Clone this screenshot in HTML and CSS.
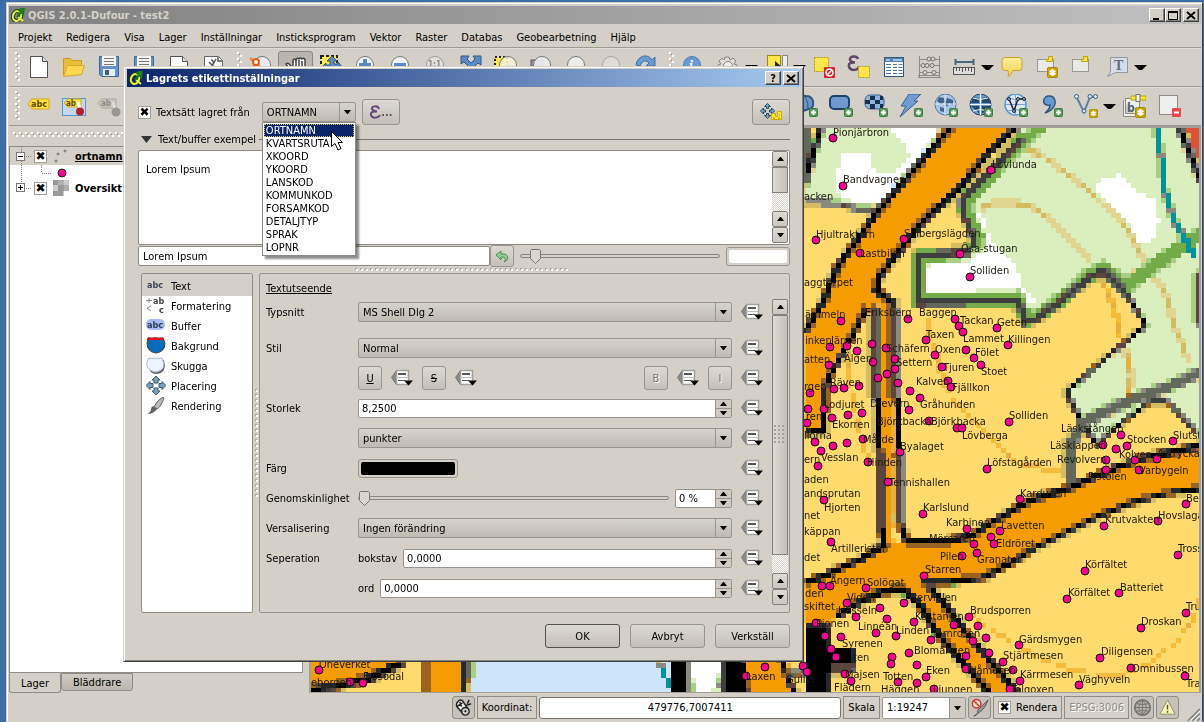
FILE: index.html
```html
<!DOCTYPE html>
<html lang="sv">
<head>
    <meta charset="UTF-8">
    <meta name="viewport" content="width=device-width, initial-scale=1.0">
    <title>QGIS 2.0.1-Dufour - test2</title>
    <link rel="stylesheet" href="styles.css">
</head>
<body>
    <!-- icons -->
    <svg class="defs" width="0" height="0" aria-hidden="true">
        <defs>
            <linearGradient id="gYellow" x1="0" y1="0" x2="0" y2="1"><stop offset="0" stop-color="#fdf0a0"/><stop offset="1" stop-color="#ecd04c"/></linearGradient>
        </defs>
        <symbol id="logo" viewBox="0 0 14 14"><ellipse cx="6" cy="8" rx="4" ry="5" transform="rotate(20 6 8)" fill="none" stroke="#1f3d0c" stroke-width="4"/><ellipse cx="6" cy="8" rx="4" ry="5" transform="rotate(20 6 8)" fill="none" stroke="#eaf24a" stroke-width="2"/><path d="M7 9l5 4" stroke="#eaf24a" stroke-width="2"/><path d="M6 9l5-6M8 2l5-2-1 6z" stroke="#1c7a1c" stroke-width="2" fill="#3db52f"/></symbol>
        <symbol id="plus" viewBox="0 0 9 9"><rect x=".5" y=".5" width="8" height="8" rx="1" fill="#5a9a5a" stroke="#3e7d42"/><path d="M4.500 2v5M2 4.500h5" stroke="#fff" stroke-width="2"/></symbol>
        <symbol id="star" viewBox="0 0 11 11"><rect x=".5" y=".5" width="10" height="10" rx="1" fill="#c9a400" stroke="#a98a00"/><path d="M5.500 2v7M2.500 3.800l6 3.400M8.500 3.800l-6 3.400" stroke="#fff" stroke-width="2"/></symbol>
        <symbol id="new" viewBox="0 0 24 24"><path d="M3.500 1.500h12l5 5v16h-17z" fill="#fff" stroke="#555"/><path d="M15.500 1.500v5h5" fill="#ddd" stroke="#555"/></symbol>
        <symbol id="open" viewBox="0 0 24 24"><path d="M1.500 21V3.500h7l2 2h9v4" fill="#e8bf3b" stroke="#c79b1f"/><path d="M1.500 21.500l4-11H22.500l-3 9z" fill="#ffd84f" stroke="#d6a928"/></symbol>
        <symbol id="save" viewBox="0 0 24 24"><path d="M2.500 1.500h19v20h-17l-2-2z" fill="#6492c8" stroke="#42678f"/><rect x="5" y="1" width="14" height="10" fill="#f4f4f4"/><path d="M7 3.500h10M7 6.500h10M7 9.500h10" stroke="#777"/><rect x="6" y="14" width="12" height="7" fill="#e8edf3"/><rect x="8" y="15" width="4" height="5" fill="#3b5c86"/></symbol>
        <symbol id="tools" viewBox="0 0 24 24"><path d="M2.500 1.500h14l4 4v16h-18z" fill="#fff" stroke="#666"/><path d="M16 2v4h4M7 7l9 9M9 5c2 0 3 2 2 4M14 4l-5 9" fill="none" stroke="#555" stroke-width="1.500"/></symbol>
        <symbol id="touch" viewBox="0 0 24 24"><circle cx="13" cy="10" r="8.500" fill="#eee" stroke="#777"/><path d="M1 3l10 9" stroke="#e98b4c" stroke-width="3"/><circle cx="7" cy="7" r="3" fill="#fff" stroke="#e35b12" stroke-width="2"/></symbol>
        <symbol id="hand" viewBox="0 0 24 24"><path d="M5 14L2 9q2-2 4 1l3 3V5q2-2 3 0 1-3 3-1 1-2 3 0 2-2 3 1v10l-3 6h-8z" fill="#fff" stroke="#444" stroke-width="1.500"/><path d="M12 5v6M15 5v6M18 6v5" stroke="#444" stroke-width="1.500"/></symbol>
        <symbol id="panto" viewBox="0 0 24 24"><rect x="2" y="1" width="16" height="18" fill="#ffe948" stroke="#222" stroke-width="2" stroke-dasharray="3 2"/><path d="M13 1l5 5h-3v3h4V7l5 6-5 5v-3H7v3l-5-5 5-5v2h4V6H8z" fill="#5b8cc9" stroke="#2d5583"/></symbol>
        <symbol id="zin" viewBox="0 0 24 24"><circle cx="11" cy="10" r="8.500" fill="#f2f4f8" stroke="#777"/><path d="M11 4v12M5 10h12" stroke="#5a8ac6" stroke-width="4"/></symbol>
        <symbol id="zout" viewBox="0 0 24 24"><circle cx="11" cy="10" r="8.500" fill="#f2f4f8" stroke="#777"/><path d="M5 10h12" stroke="#5a8ac6" stroke-width="4"/></symbol>
        <symbol id="z11" viewBox="0 0 24 24"><circle cx="11" cy="10" r="8.500" fill="#e4e1dc" stroke="#999"/><text x="4" y="12" font-size="8" font-weight="bold" fill="#888">1:1</text></symbol>
        <symbol id="zfull" viewBox="0 0 24 24"><path d="M2 1h8L8 4l4 4 4-4-2-3h8v9l-3-2-4 4 4 4 3-2v7h-8l2-3-4-4-4 4 2 3H2v-8l3 2 4-4-4-4-3 2z" fill="#5c8ac2" stroke="#34597f"/></symbol>
        <symbol id="zsel" viewBox="0 0 24 24"><rect x="1" y="2" width="12" height="14" fill="#ffe948" stroke="#222" stroke-width="2" stroke-dasharray="2 2"/><circle cx="14" cy="10" r="8.500" fill="#f3efd2" fill-opacity=".9" stroke="#777"/></symbol>
        <symbol id="zlay" viewBox="0 0 24 24"><rect x="2" y="5" width="12" height="14" fill="#9b93a8" stroke="#555"/><circle cx="13" cy="10" r="8.500" fill="#eeeef2" fill-opacity=".9" stroke="#777"/></symbol>
        <symbol id="zlast" viewBox="0 0 24 24"><circle cx="12" cy="10" r="8.500" fill="#ececec" stroke="#777"/></symbol>
        <symbol id="znext" viewBox="0 0 24 24"><circle cx="12" cy="10" r="8.500" fill="#dfdcd6" stroke="#aaa49a"/></symbol>
        <symbol id="refresh" viewBox="0 0 24 24"><path d="M2 10C4-1 15-1 18 5l3-3v9h-9l3-3C13 5 8 5 6 11z" fill="#6a9ad2" stroke="#3c6ea5"/></symbol>
        <symbol id="info" viewBox="0 0 24 24"><circle cx="11" cy="10" r="8.500" fill="#6a9ad6" stroke="#4d7db8"/><text x="8" y="15" font-size="14" font-style="italic" font-weight="bold" font-family="Liberation Serif, serif" fill="#fff">i</text></symbol>
        <symbol id="gear" viewBox="0 0 24 24"><path d="M9 2h4l1 3 3-2 3 3-2 3 3 1v4H2v-4l3-1-2-3 3-3 2 2z" fill="#dedbd5" stroke="#88847c"/><circle cx="12" cy="11" r="4.500" fill="#eee" stroke="#88847c"/></symbol>
        <symbol id="select" viewBox="0 0 24 24"><rect x="3.500" y=".5" width="13" height="14" fill="#ffe948" stroke="#9c8a10"/><rect x="18.500" y=".5" width="5" height="14" fill="#eee" stroke="#888"/><path d="M11 6v10l3-3 4-1z" fill="#222"/></symbol>
        <symbol id="deselect" viewBox="0 0 24 24"><rect x="2.500" y="2.500" width="14" height="14" fill="#ffe74a" stroke="#b79b17" stroke-dasharray="2 1"/><rect x="12" y="12" width="11" height="11" rx="1" fill="#e0212b"/><circle cx="17.500" cy="17.500" r="3.500" fill="none" stroke="#fff" stroke-width="1.500"/><path d="M15 20l5-5" stroke="#fff" stroke-width="1.500"/></symbol>
        <symbol id="expr" viewBox="0 0 24 24"><path d="M11 4C10 0 2 1 3 5q1 2 5 2.500Q1 7 2 11.500c1 5 9 4 10 0" fill="none" stroke="#5f4569" stroke-width="2.500"/><rect x="11.500" y="11.500" width="11" height="11" fill="#ffe74a" stroke="#b79b17" stroke-dasharray="2 1"/></symbol>
        <symbol id="table" viewBox="0 0 24 24"><rect x="2.500" y="2.500" width="19" height="19" fill="#fff" stroke="#345a7a"/><rect x="3" y="3" width="18" height="4" fill="#4f81b5"/><path d="M4 9.500h5M4 12.500h5M4 15.500h5M4 18.500h5M11 9.500h4M11 12.500h4M11 15.500h4M11 18.500h4M16.500 9.500h4M16.500 12.500h4M16.500 15.500h4M16.500 18.500h4" stroke="#547b9e"/><path d="M4 5h4M11 5h9" stroke="#fff"/></symbol>
        <symbol id="abacus" viewBox="0 0 24 24"><path d="M2.500 1v22M22.500 1v22M1 22.500h23M1 20.500h22M3 4.500h19M3 10.500h19M3 17.500h19" stroke="#8f8b84"/><g fill="#d9d5ce" stroke="#77736c"><circle cx="12" cy="4" r="2"/><circle cx="16" cy="4" r="2"/><circle cx="6" cy="10.500" r="2"/><circle cx="10" cy="10.500" r="2"/><circle cx="15" cy="10.500" r="2"/><circle cx="8" cy="17.500" r="2"/><circle cx="17" cy="17.500" r="2"/></g></symbol>
        <symbol id="measure" viewBox="0 0 24 24"><path d="M3.500 4v6M21.500 4v6M3 7h18" stroke="#46697e" stroke-width="2" fill="none"/><rect x="1.500" y="12.500" width="21" height="7" fill="#dedede" stroke="#555"/><path d="M4.500 13v3M7.500 13v3M10.500 13v4M13.500 13v3M16.500 13v3M19.500 13v4" stroke="#555"/></symbol>
        <symbol id="tip" viewBox="0 0 24 24"><path d="M5 2.500h14q3 0 3 3v7q0 3-3 3h-6q-2 5-5 6 1-3 0-6H5q-3 0-3-3v-7q0-3 3-3z" fill="url(#gYellow)" stroke="#c9a21a"/></symbol>
        <symbol id="bmark" viewBox="0 0 24 24"><path d="M2.500 4.500h16v12h-16z" fill="#e9e9e6" stroke="#555" stroke-dasharray="1 1"/><path d="M11.500 4.500h2v-3h4v5h-6z" fill="#ffe53a" stroke="#c2a200"/></symbol>
        <symbol id="anno" viewBox="0 0 24 24"><path d="M5.500 2.500h17v15h-12l-8 4 3-5z" fill="#d6dde6" stroke="#8f98a5"/><text x="9" y="15" font-size="14" font-weight="bold" font-family="Liberation Serif, serif" fill="#626b75">T</text></symbol>
        <symbol id="abc" viewBox="0 0 24 24"><path d="M1 10l4-5h17v10H5z" fill="#ffe23e" stroke="#d3a915"/><text x="4" y="13" font-size="9" font-weight="bold" fill="#5b4b0c">abc</text></symbol>
        <symbol id="abcpin" viewBox="0 0 24 24"><rect x=".5" y="4.500" width="23" height="17" fill="#c3d8ee" stroke="#5e93d2"/><path d="M2 9l4-4h13v8H6z" fill="#ffe23e" stroke="#d3a915"/><text x="4" y="12" font-size="8" font-weight="bold" fill="#5b4b0c">ab</text><path d="M16 8l2 7" stroke="#fff" stroke-width="3"/><circle cx="18" cy="17.500" r="4" fill="#b3202b"/></symbol>
        <symbol id="abcgray" viewBox="0 0 24 24"><path d="M1 9l4-4h14v9H5z" fill="#c9c6c0" stroke="#aaa69e"/><text x="4" y="12" font-size="8" font-weight="bold" fill="#8b8882">ab</text><path d="M16 8l2 7" stroke="#ddd" stroke-width="3"/><circle cx="19" cy="18" r="4.500" fill="#99958f"/></symbol>
        <symbol id="pg" viewBox="0 0 24 24"><path d="M6 18C-4 6 4 0 12 2c8 0 8 8 6 12z" fill="#6a97cb" stroke="#2e5680" stroke-width="2"/><path d="M11 2q4 8 3 14M6 3q3 7-1 12" fill="none" stroke="#2e5680"/><use href="#plus" x="15" y="14" width="9" height="9"/></symbol>
        <symbol id="spatialite" viewBox="0 0 24 24"><rect x="1" y="2" width="19" height="13" rx="4" fill="#7199cf" stroke="#1f426b" stroke-width="2"/><use href="#plus" x="15" y="14" width="9" height="9"/></symbol>
        <symbol id="mssql" viewBox="0 0 24 24"><rect x="1" y="1" width="19" height="14" rx="5" fill="#8fb3de" stroke="#3c6290"/><path d="M6 2h5v4H6zM11 6h5v4h-5zM1 6h5v4H1zM6 10h5v5H6zM16 2h3v4h-3zM16 10h3v4h-3z" fill="#14324f"/><use href="#plus" x="15" y="14" width="9" height="9"/></symbol>
        <symbol id="bolt" viewBox="0 0 24 24"><path d="M10 0h12l-7 7h4L1 23l6-11H2z" fill="#6f9cd2" stroke="#355f8f"/><use href="#plus" x="15" y="14" width="9" height="9"/></symbol>
        <symbol id="wms" viewBox="0 0 24 24"><circle cx="11.500" cy="10.500" r="10.500" fill="#a9c5e6" stroke="#54799f"/><path d="M5 3l5 1 1 4-4 2-4-3zM13 4l6 2v5l-4-2-2 4-2-3zM6 13l4 1v4l-4-1z" fill="#42638a"/><path d="M1 10h21M11 1v20" stroke="#dbe8f5"/><use href="#plus" x="15" y="14" width="9" height="9"/></symbol>
        <symbol id="wcs" viewBox="0 0 24 24"><circle cx="11.500" cy="10.500" r="10.500" fill="#6c9ad2" stroke="#1f3f66"/><path d="M4 3l6 1v5H2zM13 4l6-1 3 6h-9zM2 12h8v7zM13 12h9l-4 6-5 1z" fill="#27466c"/><path d="M1 10.500h21M11.500 0v21M4 4q7 3 15 0M4 17q7-3 15 0" stroke="#f5f9ff" fill="none"/><use href="#plus" x="15" y="14" width="9" height="9"/></symbol>
        <symbol id="wfs" viewBox="0 0 24 24"><circle cx="11.500" cy="10.500" r="10.500" fill="#dce8f4" stroke="#5f95cf" stroke-width="1.500"/><path d="M1 10.500h21M11.500 0v21M4 4q7 3 15 0M4 17q7-3 15 0" stroke="#6fa3da" fill="none"/><path d="M5 5l5 12 4-12h6" stroke="#222" stroke-width="1.500" fill="none"/><g fill="#8bb4e4" stroke="#222"><circle cx="5" cy="5" r="1.500"/><circle cx="10" cy="17" r="1.500"/><circle cx="14" cy="5" r="1.500"/><circle cx="20" cy="5" r="1.500"/></g><use href="#plus" x="15" y="14" width="9" height="9"/></symbol>
        <symbol id="comma" viewBox="0 0 24 24"><path d="M9 2c8-1 9 8 4 13q-3 3-7 4 5-4 5-8C4 13 2 4 9 2z" fill="#6a98d0" stroke="#2e5680" stroke-width="1.500"/><use href="#plus" x="15" y="14" width="9" height="9"/></symbol>
        <symbol id="vec" viewBox="0 0 24 24"><path d="M3 4l7 14 6-15h6" stroke="#5d7f9d" stroke-width="2" fill="none"/><g fill="#dbe6f1" stroke="#3b5e80"><circle cx="2.500" cy="2.500" r="2"/><circle cx="10" cy="17" r="2"/><circle cx="16" cy="2.500" r="2"/><circle cx="21.500" cy="2.500" r="2"/></g><use href="#star" x="15" y="15" width="9" height="9"/></symbol>
        <symbol id="gps" viewBox="0 0 24 24"><path d="M1.500 6.500v16h14M3.500 4.500h14v15h-14z" fill="#efefed" stroke="#8f8b84"/><text x="5" y="18" font-size="12" font-weight="bold" fill="#4c6478">b</text><path d="M9 2h15v4H9z" fill="#f4ea29" stroke="#b5a800"/><rect x="14" y=".5" width="4" height="7" fill="#eee" stroke="#777"/><use href="#star" x="13" y="13" width="11" height="11"/></symbol>
        <symbol id="remove" viewBox="0 0 24 24"><rect x="2.500" y="1.500" width="18" height="19" fill="#efefef" stroke="#8f8b84"/><rect x="15" y="14" width="9" height="9" rx="1" fill="#e9474d"/><path d="M17 18.500h5" stroke="#fff" stroke-width="2"/></symbol>
        <symbol id="dd" viewBox="0 0 22 18"><path d="M.5 8.500L5 2v13z" fill="#8a8a8a" stroke="#777"/><path d="M5.500 1.500h12v14h-12z" fill="#fff" stroke="#a3a19c" stroke-width="1.500"/><path d="M5 8.500h12" stroke="#bbb"/><path d="M7 5h8" stroke="#555" stroke-width="2"/><path d="M7 11.500h7" stroke="#555"/><path d="M13 11.500h9l-4.500 5z" fill="#000"/></symbol>
        <symbol id="mouse" viewBox="0 0 20 20"><path d="M4 4q2-3 5-1l6 9-5 5-7-8q-1-3 1-5z" fill="#eee" stroke="#222" stroke-width="1.500"/><path d="M3 9l6-4M6 4l2 5M16 2l-2 4M18 6l-6 2" stroke="#222" stroke-width="1.500"/><circle cx="12" cy="14" r="4" fill="#ccc" stroke="#222" stroke-width="1.500"/><circle cx="12" cy="14" r="1" /></symbol>
        <symbol id="norender" viewBox="0 0 20 20"><path d="M19 2q-3 9-9 13l-6 4q5-1 4-6z" fill="#999" stroke="#555"/><circle cx="7" cy="6" r="4.500" fill="#f4dcd9" stroke="#d3322d" stroke-width="1.500"/><path d="M4 3l6 6" stroke="#d3322d" stroke-width="1.500"/></symbol>
        <symbol id="globe" viewBox="0 0 20 20"><circle cx="10" cy="10" r="8" fill="#b5b3ae" stroke="#77756f" stroke-width="2"/><path d="M2 10h16M10 2v16M4 6q6 2 12 0M4 14q6-2 12 0M10 2q-8 8 0 16 8-8 0-16" fill="none" stroke="#77756f"/></symbol>
        <symbol id="warn" viewBox="0 0 20 20"><path d="M10 2l8 15H2z" fill="#fbf6ae" stroke="#8e8b77"/><path d="M10 7v5M10 13.500v2" stroke="#555" stroke-width="1.500"/></symbol>
        <symbol id="up" viewBox="0 0 7 4"><path d="M0 4h7L4 0H3z"/></symbol>
        <symbol id="down" viewBox="0 0 7 4"><path d="M0 0h7L4 4H3z"/></symbol>
    </svg>

    <main class="window">
        <header class="titlebar">
            <svg class="logo"><use href="#logo"/></svg>
            <h1>QGIS 2.0.1-Dufour - test2</h1>
            <button class="winbtn" aria-label="Minimera"><svg viewBox="0 0 10 9"><path d="M1 8h6" stroke="#000" stroke-width="2"/></svg></button><button class="winbtn" aria-label="Maximera"><svg viewBox="0 0 10 9"><path d="M.5 1v7.500h9V1M0 1h10" fill="none" stroke="#000"/><path d="M0 1h10" stroke="#000" stroke-width="2"/></svg></button>
            <button class="winbtn" aria-label="Stäng"><svg viewBox="0 0 10 9"><path d="M1 1l8 7M9 1L1 8" stroke="#000" stroke-width="2"/></svg></button>
        </header>
        <nav class="menubar">
            <a href="#">Projekt</a><a href="#">Redigera</a><a href="#">Visa</a><a href="#">Lager</a><a href="#">Inställningar</a><a href="#">Insticksprogram</a><a href="#">Vektor</a><a href="#">Raster</a><a href="#">Databas</a><a href="#">Geobearbetning</a><a href="#">Hjälp</a>
        </nav>
        <div class="toolbar">
            <span class="grip"></span>
            <button class="tool"><svg><use href="#new"/></svg></button>
            <button class="tool"><svg><use href="#open"/></svg></button>
            <button class="tool"><svg><use href="#save"/></svg></button>
            <button class="tool"><svg><use href="#save"/></svg></button>
            <button class="tool"><svg><use href="#new"/></svg></button>
            <button class="tool"><svg><use href="#tools"/></svg></button>
            <span class="grip"></span>
            <button class="tool"><svg><use href="#touch"/></svg></button>
            <button class="tool pressed"><svg><use href="#hand"/></svg></button>
            <button class="tool"><svg><use href="#panto"/></svg></button>
            <button class="tool"><svg><use href="#zin"/></svg></button>
            <button class="tool"><svg><use href="#zout"/></svg></button>
            <button class="tool"><svg><use href="#z11"/></svg></button>
            <button class="tool"><svg><use href="#zfull"/></svg></button>
            <button class="tool"><svg><use href="#zsel"/></svg></button>
            <button class="tool"><svg><use href="#zlay"/></svg></button>
            <button class="tool"><svg><use href="#zlast"/></svg></button>
            <button class="tool"><svg><use href="#znext"/></svg></button>
            <button class="tool"><svg><use href="#refresh"/></svg></button>
            <span class="grip"></span>
            <button class="tool"><svg><use href="#info"/></svg></button>
            <button class="tool"><svg><use href="#gear"/></svg></button>
            <button class="more"></button>
            <button class="tool"><svg><use href="#select"/></svg></button>
            <button class="more"></button>
            <button class="tool"><svg><use href="#deselect"/></svg></button>
            <button class="tool"><svg><use href="#expr"/></svg></button>
            <button class="tool"><svg><use href="#table"/></svg></button>
            <button class="tool"><svg><use href="#abacus"/></svg></button>
            <button class="tool"><svg><use href="#measure"/></svg></button>
            <button class="more"></button>
            <button class="tool"><svg><use href="#tip"/></svg></button>
            <button class="tool"><svg><use href="#bmark"/><use href="#star" x="12" y="12" width="11" height="11"/></svg></button>
            <button class="tool"><svg><use href="#bmark"/></svg></button>
            <button class="tool"><svg><use href="#anno"/></svg></button>
            <button class="more"></button>
        </div>
        <div class="toolbar">
            <span class="grip"></span>
            <button class="tool"><svg><use href="#abc"/></svg></button>
            <button class="tool"><svg><use href="#abcpin"/></svg></button>
            <button class="tool"><svg><use href="#abcgray"/></svg></button>
            <div class="tools-right">
                <button class="tool"><svg><use href="#pg"/></svg></button>
                <button class="tool"><svg><use href="#spatialite"/></svg></button>
                <button class="tool"><svg><use href="#mssql"/></svg></button>
                <button class="tool"><svg><use href="#bolt"/></svg></button>
                <button class="tool"><svg><use href="#wms"/></svg></button>
                <button class="tool"><svg><use href="#wcs"/></svg></button>
                <button class="tool"><svg><use href="#wfs"/></svg></button>
                <button class="tool"><svg><use href="#comma"/></svg></button>
                <button class="tool"><svg><use href="#vec"/></svg></button>
                <button class="more"></button>
                <button class="tool"><svg><use href="#gps"/></svg></button>
                <button class="tool"><svg><use href="#remove"/></svg></button>
            </div>
        </div>

        <div class="workspace">
            <aside class="dock">
                <div class="dock-grip"></div>
                <ul class="tree">
                    <li class="current">
                        <svg class="branch" viewBox="0 0 22 18"><path d="M11.500 0v5M11.500 14v4M16 9.500h6" stroke="#888" stroke-dasharray="1 1"/><rect x="6.500" y="5.500" width="8" height="8" fill="#fff" stroke="#777"/><path d="M8 9.500h5" stroke="#000"/></svg>
                        <input type="checkbox" id="lyr1" checked>
                        <svg class="lyr" viewBox="0 0 16 16"><g fill="#9fb0bd" stroke="#667885"><circle cx="5" cy="6" r="1"/><circle cx="12" cy="3" r="1"/><circle cx="3" cy="13" r="1"/></g></svg>
                        <label for="lyr1"><u>ortnamn</u></label>
                    </li>
                    <li>
                        <svg class="symbol" viewBox="0 0 60 14"><path d="M11.500 0v14M31.500 0v8M32 8.500h10" fill="none" stroke="#888" stroke-dasharray="1 1"/><circle cx="52" cy="8" r="4" fill="#f5008f" stroke="#222"/></svg>
                    </li>
                    <li>
                        <svg class="branch" viewBox="0 0 22 18"><path d="M11.500 0v5M16 9.500h6" stroke="#888" stroke-dasharray="1 1"/><rect x="6.500" y="4.500" width="8" height="8" fill="#fff" stroke="#777"/><path d="M8 8.500h5M10.500 6v5" stroke="#000"/></svg>
                        <input type="checkbox" id="lyr2" checked>
                        <svg class="lyr" viewBox="0 0 16 16"><path d="M0 0h16v16H0z" fill="#ccc"/><path d="M0 0h5v5H0zM5 5h6v6H5zM0 11h10v5H0z" fill="#999"/><path d="M5 0h6v5H5zM11 5h5v6h-5z" fill="#b0b0b0"/><path d="M11 11h5v5h-5z" fill="#fff"/></svg>
                        <label for="lyr2">Oversikt</label>
                    </li>
                </ul>
                <div class="tabs">
                    <button class="tab active">Lager</button><button class="tab">Bläddrare</button>
                </div>
            </aside>
            <section class="map">
                <canvas id="raster"></canvas>
                <svg id="places"></svg>
            </section>
        </div>

        <footer class="statusbar">
            <button class="cell icon" aria-label="Muspekare"><svg><use href="#mouse"/></svg></button>
            <label class="cell" for="coord">Koordinat:</label>
            <input class="coord" id="coord" value="479776,7007411">
            <label class="cell" for="scale">Skala</label>
            <span class="combo scale"><select id="scale"><option>1:19247</option></select><svg class="arrow"><use href="#down"/></svg></span>
            <button class="cell icon" aria-label="Stoppa rendering"><svg><use href="#norender"/></svg></button>
            <span class="cell"><input type="checkbox" id="render" checked><label for="render">Rendera</label></span>
            <span class="cell off">EPSG:3006</span>
            <button class="cell icon" aria-label="Projektion"><svg><use href="#globe"/></svg></button>
            <button class="cell icon" aria-label="Meddelanden"><svg><use href="#warn"/></svg></button>
            <svg class="sizegrip" viewBox="0 0 14 14"><path d="M1 14L14 1M6 14l8-8M11 14l3-3" stroke="#888" stroke-width="2"/><path d="M3 14L14 3M8 14l6-6" stroke="#fff"/></svg>
        </footer>
    </main>

    <section class="dialog" role="dialog" aria-labelledby="dlg-title">
        <header class="titlebar">
            <svg class="logo"><use href="#logo"/></svg>
            <h2 id="dlg-title">Lagrets etikettinställningar</h2>
            <button class="winbtn" aria-label="Hjälp"><b>?</b></button>
            <button class="winbtn" aria-label="Stäng"><svg viewBox="0 0 10 9"><path d="M1 1l8 7M9 1L1 8" stroke="#000" stroke-width="2"/></svg></button>
        </header>
        <div class="dialog-body">
            <div class="source">
                <input type="checkbox" id="labelthis" checked>
                <label for="labelthis">Textsätt lagret från</label>
                <div class="combo field">
                    <select id="field" aria-label="Fält"><option>ORTNAMN</option></select><svg class="arrow"><use href="#down"/></svg>
                    <ul class="popup" role="listbox">
                        <li class="hover">ORTNAMN</li><li>KVARTSRUTA</li><li>XKOORD</li><li>YKOORD</li><li>LANSKOD</li><li>KOMMUNKOD</li><li>FORSAMKOD</li><li>DETALJTYP</li><li>SPRAK</li><li>LOPNR</li>
                    </ul>
                    <svg class="cursor" viewBox="0 0 12 20"><path d="M.5 .5v15l3.500-3 3 6.500 3-1.500-3-6h4.500z" fill="#fff" stroke="#000"/></svg>
                </div>
                <button class="btn expression"><svg viewBox="0 0 12 14"><path d="M10 4C9 0 2 1 3 4q1 2 5 2.500Q1 6 2 10c1 4 8 3 9 0" fill="none" stroke="#67467a" stroke-width="2"/></svg>...</button>
                <button class="btn engine" aria-label="Placering"><svg viewBox="0 0 24 20"><g fill="#7fa6c4" stroke="#2b4a63"><path d="M8.500 1.500l3 3h-2v2h-2v-2h-2z"/><path d="M8.500 16.500l3-3h-2v-2h-2v2h-2z"/><path d="M1.500 9l3-3v2h2v2h-2v2z"/><path d="M15.500 9l-3-3v2h-2v2h2v2z"/></g><path d="M12.500 11.500h4v3h2v-5h4v8h-10z" fill="#ffe53a" stroke="#d0ac00"/><path d="M14 16h2M20 13h1M19 16h2" stroke="#b28f00"/></svg></button>
            </div>
            <div class="sample-head"><svg viewBox="0 0 11 7"><path d="M0 0h11L5.500 7z" fill="#333"/></svg><span>Text/buffer exempel</span><i></i></div>
            <div class="preview">
                <p>Lorem Ipsum</p>
                <div class="scrollbar">
                    <button><svg><use href="#up"/></svg></button><span class="thumb"></span><span class="track"></span><button><svg><use href="#up"/></svg></button><button><svg><use href="#down"/></svg></button>
                </div>
            </div>
            <div class="sample-row">
                <input type="text" value="Lorem Ipsum" aria-label="Exempeltext">
                <button class="btn reset" aria-label="Återställ"><svg viewBox="0 0 14 13"><path d="M1 5l5-4v3c8-1 9 6 3 8q4-5-3-5v3z" fill="#8ecb94" stroke="#55905b"/></svg></button>
                <input type="range" value="5" aria-label="Storlek på exempel">
                <button class="btn swatch" aria-label="Bakgrundsfärg"><span></span></button>
            </div>
            <div class="split-h"><span></span></div>
            <div class="panes">
                <ul class="categories">
                    <li class="active"><svg viewBox="0 0 20 20"><text x="1" y="12" font-size="9" font-weight="bold" fill="#3c4758">abc</text></svg>Text</li>
                    <li><svg viewBox="0 0 20 20"><text x="7" y="8" font-size="9" font-weight="bold" fill="#444">ab</text><text x="13" y="17" font-size="9" font-weight="bold" fill="#444">c</text><path d="M0 4.500h6M3 2v5M5 10l-4 2 4 3" fill="none" stroke="#888"/></svg>Formatering</li>
                    <li><svg viewBox="0 0 20 20"><rect x="0" y="3" width="19" height="11" rx="5" fill="#a9bdf2"/><text x="1" y="12" font-size="9" font-weight="bold" fill="#2b3a5c">abc</text></svg>Buffer</li>
                    <li><svg viewBox="0 0 20 20"><path d="M2 2h15l2 5q0 9-9 10-9-1-9-10z" fill="#0a6cb8" stroke="#444"/><path d="M2 1q4 2 7 0 4 2 8 0l1 3H1z" fill="#e8111d"/></svg>Bakgrund</li>
                    <li><svg viewBox="0 0 20 20"><path d="M5 4h13l1 6q-1 8-9 8-4 0-6-3z" fill="#666"/><path d="M3 2q3 1 6 0 4 1 7 0 4 9-1 12-5 4-11 0-6-5-1-12z" fill="#eef3ff" stroke="#a9b6d8"/></svg>Skugga</li>
                    <li><svg viewBox="0 0 20 20"><g fill="#7ba0b8" stroke="#3c5a70"><path d="M10 0l4 4h-2v3H8V4H6z"/><path d="M10 19l4-4h-2v-3H8v3H6z"/><path d="M0 9.500l4-4v2h3v4H4v2z"/><path d="M20 9.500l-4-4v2h-3v4h3v2z"/></g></svg>Placering</li>
                    <li><svg viewBox="0 0 20 20"><path d="M17 1l1 1q-3 9-7 11l-3-2Q11 4 17 1z" fill="#bbb" stroke="#666"/><path d="M7 10l4 3q-3 5-10 5 4-2 4-5 0-2 2-3z" fill="#666"/></svg>Rendering</li>
                </ul>
                <div class="split-v"><span></span></div>
                <div class="pane">
                    <h3><u>Textutseende</u></h3>
                    <div class="pane-scroll">
                        <form class="form">
                            <div class="row first"><label for="font">Typsnitt</label><span class="combo"><select id="font"><option>MS Shell Dlg 2</option></select><svg class="arrow"><use href="#down"/></svg></span><button type="button" class="dd"><svg><use href="#dd"/></svg></button></div>
                            <div class="row"><label for="style">Stil</label><span class="combo"><select id="style"><option>Normal</option></select><svg class="arrow"><use href="#down"/></svg></span><button type="button" class="dd"><svg><use href="#dd"/></svg></button></div>
                            <div class="row"><span></span>
                                <div class="styles">
                                    <button type="button" class="btn sq"><u>U</u></button><button type="button" class="dd"><svg><use href="#dd"/></svg></button>
                                    <button type="button" class="btn sq"><s>S</s></button><button type="button" class="dd"><svg><use href="#dd"/></svg></button>
                                    <span class="fill"></span>
                                    <button type="button" class="btn sq" disabled>B</button><button type="button" class="dd"><svg><use href="#dd"/></svg></button>
                                    <button type="button" class="btn sq" disabled>I</button>
                                </div>
                                <button type="button" class="dd"><svg><use href="#dd"/></svg></button></div>
                            <div class="row"><label for="size">Storlek</label><span class="spin"><input id="size" value="8,2500"><span class="steps"><button type="button"><svg><use href="#up"/></svg></button><button type="button"><svg><use href="#down"/></svg></button></span></span><button type="button" class="dd"><svg><use href="#dd"/></svg></button></div>
                            <div class="row"><span></span><span class="combo"><select aria-label="Enhet"><option>punkter</option></select><svg class="arrow"><use href="#down"/></svg></span><button type="button" class="dd"><svg><use href="#dd"/></svg></button></div>
                            <div class="row"><label for="color">Färg</label><div><button type="button" id="color" class="btn swatch black"><span></span></button></div><button type="button" class="dd"><svg><use href="#dd"/></svg></button></div>
                            <div class="row"><label for="opacity">Genomskinlighet</label>
                                <div class="inline"><input type="range" id="opacity" value="0"><span class="spin short"><input value="0 %" aria-label="Procent"><span class="steps"><button type="button"><svg><use href="#up"/></svg></button><button type="button"><svg><use href="#down"/></svg></button></span></span></div>
                                <button type="button" class="dd"><svg><use href="#dd"/></svg></button></div>
                            <div class="row"><label for="caps">Versalisering</label><span class="combo"><select id="caps"><option>Ingen förändring</option></select><svg class="arrow"><use href="#down"/></svg></span><button type="button" class="dd"><svg><use href="#dd"/></svg></button></div>
                            <div class="row"><span>Seperation</span>
                                <div class="inline"><label for="letter">bokstav</label><span class="spin"><input id="letter" value="0,0000"><span class="steps"><button type="button"><svg><use href="#up"/></svg></button><button type="button"><svg><use href="#down"/></svg></button></span></span></div>
                                <button type="button" class="dd"><svg><use href="#dd"/></svg></button></div>
                            <div class="row"><span></span>
                                <div class="inline"><label for="word">ord</label><span class="spin"><input id="word" value="0,0000"><span class="steps"><button type="button"><svg><use href="#up"/></svg></button><button type="button"><svg><use href="#down"/></svg></button></span></span></div>
                                <button type="button" class="dd"><svg><use href="#dd"/></svg></button></div>
                        </form>
                        <div class="scrollbar tall">
                            <button><svg><use href="#up"/></svg></button><span class="thumb"><i></i></span><span class="track"></span><button><svg><use href="#up"/></svg></button><button><svg><use href="#down"/></svg></button>
                        </div>
                    </div>
                </div>
            </div>
            <div class="actions">
                <button class="btn default">OK</button><button class="btn">Avbryt</button><button class="btn">Verkställ</button>
            </div>
        </div>
    </section>
    <script src="map.js"></script>
</body>
</html>
```

FILE: styles.css
```css
* {
    box-sizing: border-box;
}

body {
    margin: 0;
    height: 100vh;
    overflow: hidden;
    background-color: #3a6ea5;
    color: #000;
    font-family: "DejaVu Sans Condensed", "DejaVu Sans", sans-serif;
    font-size: 11px;
    line-height: 13px;
    padding: 2px 1px 0 6px;
}

h1, h2, h3, ul, p {
    margin: 0;
    padding: 0;
    font-size: 11px;
    list-style: none;
}

button, input, select {
    font: inherit;
    color: inherit;
    margin: 0;
    padding: 0;
}

svg {
    display: block;
    flex: none;
}

.defs {
    position: absolute;
}

/* windows */
.window {
    display: flex;
    flex-direction: column;
    height: 100%;
    background-color: #d4d0c8;
    border: 1px solid #d4d0c8;
    border-right-color: #404040;
    box-shadow: inset 1px 1px #fff;
    padding: 3px 1px 0 2px;
}

.titlebar {
    display: flex;
    align-items: center;
    height: 18px;
    padding: 0 2px;
    background: linear-gradient(to right, #808080, #c0c0c0);
    color: #d4d0c8;
}

.titlebar h1, .titlebar h2 {
    flex: 1;
    padding-left: 3px;
    white-space: nowrap;
}

.logo {
    width: 14px;
    height: 14px;
}

.winbtn {
    width: 16px;
    height: 14px;
    display: flex;
    align-items: center;
    justify-content: center;
    background-color: #d4d0c8;
    border: 1px solid;
    border-color: #fff #404040 #404040 #fff;
    box-shadow: inset -1px -1px #808080;
    color: #000;
}

.winbtn:last-child {
    margin-left: 2px;
}

.winbtn svg {
    width: 10px;
    height: 9px;
}

.menubar {
    display: flex;
    align-items: center;
    gap: 14px;
    height: 24px;
    padding: 3px 9px 0;
    border-bottom: 1px solid #9d9a93;
}

.menubar a {
    color: #000;
    text-decoration: none;
}

.toolbar {
    display: flex;
    align-items: center;
    height: 39px;
    border-bottom: 1px solid #9d9a93;
    box-shadow: inset 0 1px #e0ddd7;
    overflow: hidden;
}

.grip {
    flex: none;
    width: 12px;
    height: 30px;
    background:
        conic-gradient(from 270deg at 2px 2px, #fff 90deg, transparent 0) 6px 0 / 20px 6px repeat-y,
        conic-gradient(from 270deg at 2px 2px, #fff 90deg, transparent 0) 9px 3px / 20px 6px repeat-y,
        conic-gradient(from 270deg at 2px 2px, #aaa69e 90deg, transparent 0) 7px 1px / 20px 6px repeat-y;
}

.tool {
    flex: none;
    width: 35px;
    height: 33px;
    display: flex;
    align-items: center;
    justify-content: center;
    background: none;
    border: 1px solid transparent;
    border-radius: 3px;
}

.tool svg {
    width: 24px;
    height: 24px;
}

.tool.pressed {
    background-color: #bab6ae;
    border-color: #8a877f;
}

.more {
    flex: none;
    width: 13px;
    height: 30px;
    background: none;
    border: none;
}

.more::after {
    content: "";
    display: block;
    border: 5px solid transparent;
    border-top-color: #000;
    border-bottom: 0;
}

.tools-right {
    display: flex;
    margin-left: auto;
    align-items: center;
    padding-right: 15px;
}

/* docked layer panel */
.workspace {
    flex: 1;
    min-height: 0;
    display: flex;
    gap: 6px;
}

.dock {
    width: 294px;
    flex: none;
    display: flex;
    flex-direction: column;
}

.dock-grip {
    height: 20px;
    margin: 0 2px 0 4px;
    background:
        conic-gradient(from 270deg at 2px 2px, #fff 90deg, transparent 0) 0 6px / 6px 20px repeat-x,
        conic-gradient(from 270deg at 2px 2px, #fff 90deg, transparent 0) 3px 9px / 6px 20px repeat-x,
        conic-gradient(from 270deg at 2px 2px, #aaa69e 90deg, transparent 0) 1px 7px / 6px 20px repeat-x;
}

.tree {
    flex: 1;
    background-color: #fff;
    border: 1px solid #8f8c85;
    font-weight: bold;
}

.tree li {
    display: flex;
    align-items: center;
    gap: 6px;
}

.tree li.current {
    background-color: #d4d0c8;
}

.branch {
    width: 22px;
    height: 18px;
    margin-right: -4px;
}

.lyr {
    width: 16px;
    height: 16px;
}

.symbol {
    width: 60px;
    height: 14px;
}

input[type="checkbox"] {
    appearance: none;
    flex: none;
    width: 13px;
    height: 13px;
    background-color: #fff;
    border: 1px solid #a29e96;
    display: flex;
    align-items: center;
    justify-content: center;
}

input[type="checkbox"]:checked::before {
    content: "✖";
    font: bold 12px "DejaVu Sans", sans-serif;
    line-height: 11px;
}

.tabs {
    display: flex;
    height: 20px;
    align-items: flex-start;
}

.tab {
    height: 18px;
    padding: 0 11px;
    background: linear-gradient(#cfcbc3, #bbb7af);
    border: 1px solid #8f8c85;
    border-radius: 0 0 3px 3px;
}

.tab.active {
    height: 20px;
    background: #d4d0c8;
    border-top-color: #d4d0c8;
}

/* map */
.map {
    flex: 1;
    position: relative;
    overflow: hidden;
    border: 2px solid #a29f98;
    border-bottom-width: 1px;
    background-color: #ffdb6d;
}

.map canvas {
    display: block;
    image-rendering: pixelated;
}

.map svg {
    position: absolute;
    left: 0;
    top: 0;
    width: 100%;
    height: 100%;
}

.map text {
    fill: #1d1a12;
}

.map circle {
    fill: #f5008f;
    stroke: #111;
}

/* status bar */
.statusbar {
    display: flex;
    align-items: center;
    justify-content: flex-end;
    gap: 2px;
    height: 28px;
    padding: 1px 1px 0 0;
}

.cell {
    flex: none;
    height: 23px;
    display: flex;
    align-items: center;
    gap: 5px;
    padding: 0 4px;
    background: none;
    border: 1px solid #8f8c85;
}

.cell.icon {
    padding: 0 1px;
    border-radius: 3px;
    background-color: #c6c2ba;
}

.cell.icon svg {
    width: 19px;
    height: 19px;
}

.cell.off {
    color: #8f8c85;
    text-shadow: 1px 1px #fff;
}

.coord {
    width: 302px;
    height: 22px;
    text-align: center;
    background-color: #fff;
    border: 1px solid #77746d;
    border-radius: 3px;
}

.sizegrip {
    width: 13px;
    height: 13px;
    margin-left: 6px;
    align-self: flex-end;
}

/* shared controls */
.btn {
    flex: none;
    display: flex;
    align-items: center;
    justify-content: center;
    background: linear-gradient(#dcd9d3, #c4c0b8);
    border: 1px solid #98958e;
    border-radius: 3px;
}

.btn:disabled {
    color: #77746d;
    text-shadow: 1px 1px #fff;
}

.combo {
    position: relative;
    display: flex;
    height: 20px;
}

.combo select {
    appearance: none;
    flex: 1;
    width: 100%;
    height: 100%;
    padding: 0 20px 0 4px;
    background: linear-gradient(#d6d3cc, #bfbbb3);
    border: 1px solid #98958e;
    border-radius: 2px;
}

/* drop-down arrow, lies over the right end of the select */
.arrow {
    position: absolute;
    right: 1px;
    top: 1px;
    bottom: 1px;
    width: 16px;
    height: calc(100% - 2px);
    padding: 0 4px;
    border-left: 1px solid #98958e;
    pointer-events: none;
}

.scale {
    width: 84px;
    height: 22px;
}

.scale select {
    background: #fff;
}

.scale .arrow {
    background-color: #cfcbc4;
}

.spin {
    flex: 1;
    display: flex;
    height: 19px;
    border: 1px solid #98958e;
    border-radius: 2px;
    background-color: #fff;
    overflow: hidden;
}

.spin.short {
    flex: none;
    width: 57px;
}

.spin input {
    flex: 1;
    width: 10px;
    border: none;
    padding: 0 3px;
    background: none;
}

.steps {
    width: 16px;
    display: flex;
    flex-direction: column;
    border-left: 1px solid #98958e;
}

.steps button {
    flex: 1;
    display: flex;
    align-items: center;
    justify-content: center;
    border: none;
    background-color: #cfcbc4;
}

.steps button + button {
    border-top: 1px solid #98958e;
}

.steps svg, .scrollbar svg {
    width: 7px;
    height: 4px;
}

input[type="range"] {
    appearance: none;
    flex: 1;
    height: 20px;
    background: none;
}

input[type="range"]::-webkit-slider-runnable-track {
    height: 4px;
    border: 1px solid #8a877f;
    border-radius: 2px;
}

input[type="range"]::-webkit-slider-thumb {
    appearance: none;
    width: 11px;
    height: 15px;
    margin-top: -6px;
    background: url("data:image/svg+xml,%3Csvg xmlns='http://www.w3.org/2000/svg' width='11' height='15'%3E%3Cpath d='M1.500.5h8l1 1v8l-5 5-5-5v-8z' fill='%23d9d6cf' stroke='%2377746d'/%3E%3C/svg%3E");
}

.scrollbar {
    width: 16px;
    flex: none;
    display: flex;
    flex-direction: column;
}

.scrollbar button {
    height: 16px;
    display: flex;
    align-items: center;
    justify-content: center;
    background: linear-gradient(#dedbd5, #cbc7bf);
    border: 1px solid #85827b;
    border-radius: 2px;
}

.thumb {
    height: 26px;
    background: linear-gradient(to right, #dedbd5, #c4c0b8);
    border: 1px solid #85827b;
    display: flex;
    align-items: center;
    justify-content: center;
}

.thumb i {
    width: 12px;
    height: 20px;
    background: conic-gradient(from 270deg at 2px 2px, #a5a199 90deg, transparent 0) 0 0 / 4px 4px;
}

.track {
    flex: 1;
    background: repeating-conic-gradient(#fff 0 25%, #d4d0c8 0 50%) 0 0 / 2px 2px;
}

.tall .thumb {
    height: 240px;
}

/* label settings dialog */
.dialog {
    position: absolute;
    left: 123px;
    top: 66px;
    width: 681px;
    background-color: #d4d0c8;
    border: 1px solid;
    border-color: #d4d0c8 #404040 #404040 #d4d0c8;
    box-shadow: inset 1px 1px #fff, inset -1px -1px #808080;
    padding: 2px 2px 2px 3px;
}

.dialog .titlebar {
    background: linear-gradient(to right, #0a246a, #a6caf0);
    color: #fff;
}

.dialog-body {
    padding: 12px 11px 11px;
}

.source {
    display: flex;
    align-items: center;
    gap: 5px;
    height: 26px;
}

.source .field {
    width: 94px;
    margin-left: 7px;
}

.popup {
    position: absolute;
    z-index: 2;
    left: 0;
    top: 20px;
    width: 94px;
    padding: 1px;
    background-color: #fff;
    border: 1px solid #8f8c85;
    box-shadow: 3px 3px 2px rgba(0, 0, 0, 0.45);
}

.popup li {
    padding-left: 2px;
}

.popup .hover {
    background-color: #0a246a;
    color: #fff;
    outline: 1px dotted #d9c86a;
    outline-offset: -1px;
}

.cursor {
    position: absolute;
    z-index: 3;
    left: 69px;
    top: 29px;
    width: 12px;
    height: 20px;
}

.expression {
    width: 38px;
    height: 26px;
    margin-left: 1px;
    font-weight: bold;
    color: #555;
}

.expression svg {
    width: 12px;
    height: 14px;
}

.engine {
    width: 38px;
    height: 26px;
    margin-left: auto;
}

.engine svg {
    width: 24px;
    height: 20px;
}

.sample-head {
    display: flex;
    align-items: center;
    height: 25px;
    padding: 3px 0 0 3px;
}

.sample-head svg {
    width: 11px;
    height: 7px;
    margin-right: 6px;
}

.sample-head i {
    flex: 1;
    margin-left: 3px;
    border-top: 1px solid #77746d;
}

.preview {
    display: flex;
    justify-content: space-between;
    height: 95px;
    padding: 0 1px 1px;
    background-color: #fff;
    border: 1px solid #8f8c85;
    border-radius: 2px;
}

.preview p {
    padding: 12px 6px;
}

.sample-row {
    display: flex;
    align-items: center;
    height: 22px;
}

.sample-row input[type="text"] {
    width: 352px;
    height: 20px;
    padding: 0 4px;
    border: 1px solid #8f8c85;
    border-radius: 2px;
}

.sample-row .reset {
    width: 24px;
    height: 22px;
}

.reset svg {
    width: 14px;
    height: 13px;
}

.sample-row input[type="range"] {
    margin: 0 6px;
}

.swatch {
    width: 64px;
    height: 19px;
    padding: 2px;
    background: #d4d0c8;
}

.swatch span {
    flex: 1;
    height: 13px;
    border-radius: 2px;
    background-color: #fff;
}

.swatch.black {
    width: 100px;
}

.swatch.black span {
    background-color: #000;
}

.split-h {
    height: 6px;
    display: flex;
    justify-content: center;
}

.split-h span {
    width: 213px;
    margin-right: 6px;
    background:
        conic-gradient(from 270deg at 2px 2px, #fff 90deg, transparent 0) 1px 2px / 5px 8px repeat-x,
        conic-gradient(from 270deg at 2px 2px, #aaa69e 90deg, transparent 0) 0 1px / 5px 8px repeat-x;
}

.panes {
    display: flex;
    padding-left: 3px;
}

.categories {
    width: 112px;
    background-color: #fff;
    border: 1px solid #8f8c85;
    border-radius: 2px;
}

.categories li {
    display: flex;
    align-items: center;
    gap: 5px;
    height: 20px;
    padding-left: 4px;
}

.categories li.active {
    background-color: #d4d0c8;
    height: 22px;
    padding-top: 2px;
}

.categories svg {
    width: 20px;
    height: 20px;
}

.split-v {
    width: 6px;
    display: flex;
    align-items: center;
}

.split-v span {
    width: 5px;
    height: 108px;
    background:
        conic-gradient(from 270deg at 2px 2px, #fff 90deg, transparent 0) 3px 1px / 8px 5px repeat-y,
        conic-gradient(from 270deg at 2px 2px, #aaa69e 90deg, transparent 0) 2px 0 / 8px 5px repeat-y;
}

.pane {
    flex: 1;
    border: 1px solid #98958e;
    border-radius: 2px;
    padding: 0 1px 9px 6px;
}

.pane h3 {
    height: 23px;
    padding-top: 8px;
    font-weight: normal;
}

.pane-scroll {
    display: flex;
    gap: 9px;
}

.form {
    flex: 1;
}

.row {
    display: grid;
    grid-template-columns: 92px 1fr 31px;
    align-items: center;
    height: 30px;
}

.row.first {
    margin-bottom: 6px;
}

.row > .dd {
    justify-self: end;
}

.dd {
    width: 22px;
    height: 18px;
    background: none;
    border: none;
}

.dd svg {
    width: 22px;
    height: 18px;
}

.styles {
    display: flex;
    align-items: center;
    gap: 9px;
}

.styles .fill {
    flex: 1;
}

.sq {
    width: 24px;
    height: 24px;
}

.inline {
    display: flex;
    align-items: center;
    gap: 6px;
}

.scrollbar.tall {
    margin: 2px 0 -2px;
}

.actions {
    display: flex;
    justify-content: flex-end;
    gap: 10px;
    padding-top: 11px;
}

.actions .btn {
    width: 75px;
    height: 24px;
}

.actions .default {
    border-color: #55524c;
}
```

FILE: map.js
```js
const CELL = 5;
const EXTENT = { x: 311, y: 128 };

const C = {
    yellow: "#ffdb6d", green: "#daeebe", white: "#ffffff", orange: "#f59c00",
    black: "#000000", brown: "#5a463f", dark: "#3d3f3f", leaf: "#72ab47",
    tan: "#d4bd60", sand: "#e9ae3c", grey: "#62695a", teal: "#00939b",
    red: "#de5236", water: "#cde4fb"
};

// colours that appear only where two areas meet
const mixes = ["#9a6420", "#24292b", "#a9cf85", "#e0d591", "#f7bb3a", "#8a8a80"];

// [colour, points...]
const areas = [
    ["green", 818,127, 940,127, 880,212, 850,203, 804,203, 804,186],
    ["white", 887,127, 936,127, 934,142, 881,207, 854,203, 836,192, 836,173, 844,152, 869,152, 874,170, 894,172, 912,155, 904,145],
    ["green", 1018,127, 1202,127, 1202,440, 1194,430, 1168,402, 1150,402, 1110,432, 1096,446, 1066,393, 1085,375, 1145,326, 1103,268, 1060,302, 1030,322, 1018,300, 917,303, 917,255, 972,248, 962,205, 1022,142],
    ["white", 977,213, 986,223, 991,240, 1014,260, 1021,283, 1036,303, 1030,308, 1015,293, 928,293, 928,262, 973,258],
    ["white", 1097,183, 1121,173, 1137,193, 1157,200, 1159,220, 1151,243, 1137,240, 1124,217, 1097,197],
    ["red", 1184,127, 1202,127, 1202,168],
    ["orange", 951,127, 1017,127, 991,150, 961,187, 921,223, 879,277, 876,290, 896,303, 892,540, 906,545, 947,542, 974,535, 991,523, 1031,500, 1071,487, 1104,472, 1137,460, 1167,453, 1202,445, 1202,487, 1167,493, 1131,503, 1097,517, 1037,547, 984,577, 929,585, 944,603, 981,650, 1014,695, 986,695, 954,653, 921,607, 904,587, 882,592, 857,603, 830,622, 804,625, 804,583, 826,575, 859,560, 882,545, 882,307, 867,307, 837,363, 826,383, 824,430, 804,433, 804,333, 824,300, 837,267, 879,210],
    ["orange", 311,640, 400,640, 400,667, 345,684, 311,688],
    ["orange", 426,640, 466,640, 466,695, 426,695],
    ["water", 471,640, 671,640, 671,695, 471,695],
    ["black", 671,640, 746,640, 752,695, 671,695],
    ["white", 688,640, 722,640, 722,695, 688,695],
    ["orange", 741,640, 785,640, 790,695, 750,695]
];

// [colour, width, points...]
const lines = [
    ["tan", 5, 1026,148, 1044,157, 1091,192, 1124,223, 1144,260],
    ["tan", 5, 979,208, 997,203, 1031,205, 1054,223, 1091,260],
    ["tan", 5, 1152,275, 1166,293, 1174,327, 1189,360],
    ["sand", 5, 1102,280, 1114,307, 1121,337, 1127,353, 1131,376, 1127,407],
    ["sand", 4, 926,308, 927,335, 937,353, 944,387, 964,412, 991,440, 1017,463, 1064,473],
    ["sand", 4, 847,350, 852,400, 869,465],
    ["sand", 4, 969,612, 991,630, 1037,657, 1077,672, 1121,675, 1151,663, 1181,637, 1194,617, 1200,598],
    ["leaf", 14, 1120,290, 1202,232],
    ["leaf", 12, 1044,124, 1026,140],
    ["leaf", 13, 1026,138, 968,200, 966,212, 979,238, 976,250],
    ["leaf", 14, 972,252, 919,257, 919,301, 1017,298, 1026,320, 1038,316, 1062,299, 1087,277, 1103,268, 1132,292],
    ["dark", 7, 1022,138, 962,200, 962,212, 974,238, 973,248],
    ["dark", 7, 972,252, 918,256, 918,303, 1018,300, 1025,322, 1036,320, 1060,302, 1085,281, 1103,270, 1126,294],
    ["black", 5, 1126,294, 1146,325, 1110,354, 1085,376, 1066,392, 1076,412, 1097,446, 1110,432, 1150,402, 1168,402, 1196,432],
    ["grey", 11, 1202,372, 1171,386, 1124,403, 1087,420, 1070,443, 1071,483],
    ["teal", 6, 1156,127, 1161,153, 1164,187, 1174,220, 1195,256],
    ["black", 6, 1179,127, 1202,183],
    ["brown", 6, 1198,272, 1198,325],
    ["brown", 8, 806,127, 806,185],
    ["black", 6, 821,127, 808,172],
    ["brown", 5, 804,202, 840,204, 856,209, 884,209],
    // main road edges
    ["black", 7, 951,127, 879,210, 837,267, 824,300, 804,333],
    ["black", 7, 1017,127, 991,150, 961,187, 921,223, 879,277, 876,290, 896,305],
    ["black", 6, 867,307, 854,333, 837,363, 826,383, 824,430, 804,433],
    ["brown", 10, 875,306, 875,400],
    ["brown", 10, 894,306, 894,400],
    ["black", 5, 878,398, 878,452],
    ["black", 5, 898,398, 898,452],
    ["brown", 10, 881,450, 881,525],
    ["brown", 10, 899,450, 899,525],
    ["black", 7, 881,525, 884,546, 859,560, 826,575, 804,584],
    ["black", 7, 901,525, 907,542, 947,542, 974,535, 991,523, 1031,500, 1071,487, 1104,472, 1137,460, 1167,453, 1202,445],
    ["black", 6, 1202,488, 1167,493, 1131,503, 1097,517, 1037,547, 1011,563, 984,577, 947,582, 921,582],
    ["black", 7, 929,587, 944,603, 964,630, 981,650, 1001,673, 1018,695],
    ["black", 7, 837,617, 857,603, 882,592, 904,589, 921,607, 937,633, 954,653, 981,683, 990,695],
    // bottom strip
    ["black", 8, 311,690, 335,687, 370,678, 404,662],
    ["black", 5, 426,640, 426,695],
    ["black", 5, 465,640, 465,695],
    ["brown", 5, 470,640, 470,680],
    ["red", 4, 656,640, 661,668],
    ["teal", 5, 661,664, 670,690],
    ["brown", 3, 689,675, 694,692],
    ["brown", 3, 721,675, 716,692],
    ["black", 6, 780,650, 786,675, 796,695],
    ["brown", 6, 790,674, 855,670]
];

const blocks = [
    [806, 624, 24, 70], [826, 648, 29, 18]
];

const places = [
    [833,132,"Pionjärbron"], [843,179,"Bandvagnen"], [804,196,"acken"], [816,234,"Hjultraktorn"], [860,253,"Lastbilen"],
    [904,233,"Solbergslägden"], [992,164,"Lövlunda"], [961,248,"Ösa-stugan"], [970,270,"Solliden"], [804,282,"aggtorpet"],
    [805,314,"ämmeln"], [865,312,"Eriksberg"], [919,312,"Baggen"], [960,320,"Tackan"], [997,322,"Geten"],
    [926,334,"Taxen"], [963,338,"Lammet"], [1008,339,"Killingen"], [805,340,"inken"], [831,340,"Järnen"],
    [886,348,"Schäfern"], [935,349,"Oxen"], [975,352,"Fölet"], [804,359,"atten"], [844,358,"Älgen"],
    [896,362,"Settern"], [943,367,"Tjuren"], [981,371,"Stoet"], [830,382,"Räven"], [916,381,"Kalven"],
    [952,387,"Fjällkon"], [804,386,"rgen"], [824,404,"Lodjuret"], [870,403,"Drevern"], [920,404,"Gråhunden"],
    [806,416,"ren"], [832,424,"Ekorren"], [877,421,"Björkbacka"], [931,421,"Björkbacka"], [1009,415,"Solliden"],
    [962,435,"Lövberga"], [1061,428,"Läskstången"], [1050,445,"Läsklappen"], [1127,439,"Stocken"], [1173,435,"Slutste"],
    [1119,454,"Kolven"], [1157,453,"Avtryckar"], [1057,459,"Revolvern"], [1139,470,"Varbygeln"], [1088,476,"Pistolen"],
    [804,435,"llorna"], [863,439,"Mårde"], [900,446,"Byalaget"], [987,462,"Löfstagården"], [804,459,"ern"],
    [821,457,"Vesslan"], [867,462,"Hinden"], [889,482,"Tennishallen"], [804,479,"aden"], [804,493,"andsprutan"],
    [824,507,"Hjorten"], [1020,493,"Kardusen"], [923,507,"Karlslund"], [804,515,"net"], [946,522,"Karbinen"],
    [1001,525,"Lavetten"], [804,531,"käppan"], [929,538,"Mörsaren"], [996,543,"Eldröret"], [831,548,"Artilleristen"],
    [940,556,"Pilen"], [977,559,"Granaten"], [804,557,"det"], [925,569,"Starren"], [1105,519,"Krutvakten"],
    [1158,515,"Hovslagar"], [1186,498,"Bet"], [1178,548,"Tross"], [1085,564,"Körfältet"], [1120,587,"Batteriet"],
    [1068,592,"Körfältet"], [830,580,"Ängern"], [867,582,"Solögat"], [805,593,"den"], [847,597,"Viden"],
    [905,597,"Åkerviolen"], [804,606,"skiftet"], [838,610,"Hasseln"], [970,610,"Brudsporren"], [1186,606,"Tru"],
    [915,616,"Kastanjen"], [858,626,"Linnéan"], [816,623,"Pionen"], [896,630,"Linden"], [932,633,"Törnrosen"],
    [1141,621,"Droskan"], [842,643,"Syrenen"], [1019,639,"Gärdsmygen"], [914,650,"Blomängen"], [1003,655,"Stjärtmesen"],
    [1101,651,"Diligensen"], [926,670,"Eken"], [967,670,"Blåmesen"], [1020,674,"Kärrmesen"], [1132,668,"Omnibussen"],
    [1079,679,"Väghyveln"], [845,674,"Majsen"], [883,676,"Totten"], [881,689,"Häggen"], [933,689,"Ljungen"],
    [1011,689,"Talgoxen"], [834,687,"Flädern"], [853,657,"ten"], [1186,683,"Tra"], [319,664,"Öneverket"],
    [363,676,"Frösödal"], [311,682,"eborgen"], [746,676,"Laxen"], [786,679,"Gullvi"]
];

const points = [
    833,138, 843,186, 816,240, 860,253, 904,239, 991,170, 960,254, 970,277, 841,321, 908,319, 955,319, 959,326, 963,332,
    997,328, 926,340, 1008,345, 830,347, 847,346, 857,351, 872,344, 886,348, 966,350, 935,355, 974,358, 981,365, 829,365,
    873,362, 895,359, 895,369, 942,367, 887,374, 878,378, 898,383, 948,381, 951,387, 834,389, 844,388, 859,386, 910,391,
    920,398, 810,393, 808,409, 824,409, 909,410, 848,415, 862,413, 832,418, 807,423, 929,421, 957,428, 962,428, 1009,422,
    815,442, 833,446, 847,443, 863,439, 821,451, 900,452, 818,466, 868,462, 888,482, 987,469, 1121,435, 1103,445, 1116,449,
    1127,446, 1173,441, 1106,460, 1106,470, 1135,460, 1157,459, 1139,470, 824,500, 1020,499, 923,514, 967,529, 1000,531,
    991,537, 994,544, 974,544, 977,553, 962,556, 1104,526, 1158,521, 1186,504, 1178,555, 831,542, 1085,571, 1119,593,
    1067,599, 924,576, 822,586, 830,586, 866,588, 847,603, 904,603, 856,617, 880,608, 887,619, 914,622, 969,617, 954,625,
    978,626, 973,641, 986,638, 876,633, 896,636, 931,640, 816,623, 825,636, 841,637, 831,649, 836,657, 909,653, 892,657,
    891,664, 917,665, 966,656, 989,653, 1003,662, 966,669, 1013,670, 1019,645, 1020,681, 1010,689, 926,677, 917,683,
    898,682, 934,689, 845,674, 851,681, 1100,658, 1131,668, 1079,685, 1185,676, 1186,613, 1141,628, 319,670, 350,682,
    363,683, 746,676, 765,667, 803,666, 807,672
];

function toRgb(hex) {
    const n = parseInt(hex.slice(1), 16);
    return [n >> 16, (n >> 8) & 255, n & 255];
}

// snap every cell to the closest palette colour, as in an indexed tiff
function posterize(ctx, w, h) {
    const palette = [...Object.values(C), ...mixes].map(toRgb);
    const img = ctx.getImageData(0, 0, w, h);
    const d = img.data;
    for (let i = 0; i < d.length; i += 4) {
        let best = null;
        let min = Infinity;
        for (const p of palette) {
            const dist = (p[0] - d[i]) ** 2 + (p[1] - d[i + 1]) ** 2 + (p[2] - d[i + 2]) ** 2;
            if (dist < min) {
                min = dist;
                best = p;
            }
        }
        d[i] = best[0];
        d[i + 1] = best[1];
        d[i + 2] = best[2];
    }
    ctx.putImageData(img, 0, 0);
}

function drawRaster() {
    const pane = document.querySelector(".map");
    const canvas = document.getElementById("raster");
    canvas.width = Math.ceil(pane.clientWidth / CELL);
    canvas.height = Math.ceil(pane.clientHeight / CELL);
    canvas.style.width = canvas.width * CELL + "px";
    canvas.style.height = canvas.height * CELL + "px";

    const ctx = canvas.getContext("2d");
    ctx.scale(1 / CELL, 1 / CELL);
    ctx.translate(-EXTENT.x, -EXTENT.y);
    ctx.fillStyle = C.yellow;
    ctx.fillRect(0, 0, 4000, 4000);

    const trace = (pts) => {
        ctx.beginPath();
        for (let i = 0; i < pts.length; i += 2) ctx.lineTo(pts[i], pts[i + 1]);
    };
    for (const [color, ...pts] of areas) {
        ctx.fillStyle = C[color];
        trace(pts);
        ctx.fill();
    }
    for (const [color, width, ...pts] of lines) {
        ctx.strokeStyle = C[color];
        ctx.lineWidth = width;
        trace(pts);
        ctx.stroke();
    }
    ctx.fillStyle = C.black;
    for (const b of blocks) ctx.fillRect(...b);
    posterize(ctx, canvas.width, canvas.height);
}

function drawPlaces() {
    const ns = "http://www.w3.org/2000/svg";
    const svg = document.getElementById("places");
    for (let i = 0; i < points.length; i += 2) {
        const c = document.createElementNS(ns, "circle");
        c.setAttribute("cx", points[i] - EXTENT.x);
        c.setAttribute("cy", points[i + 1] - EXTENT.y);
        c.setAttribute("r", 4);
        svg.appendChild(c);
    }
    for (const [x, y, name] of places) {
        const t = document.createElementNS(ns, "text");
        t.setAttribute("x", x - EXTENT.x);
        t.setAttribute("y", y - EXTENT.y + 4);
        t.textContent = name;
        svg.appendChild(t);
    }
}

drawRaster();
drawPlaces();
window.addEventListener("resize", drawRaster);
```
